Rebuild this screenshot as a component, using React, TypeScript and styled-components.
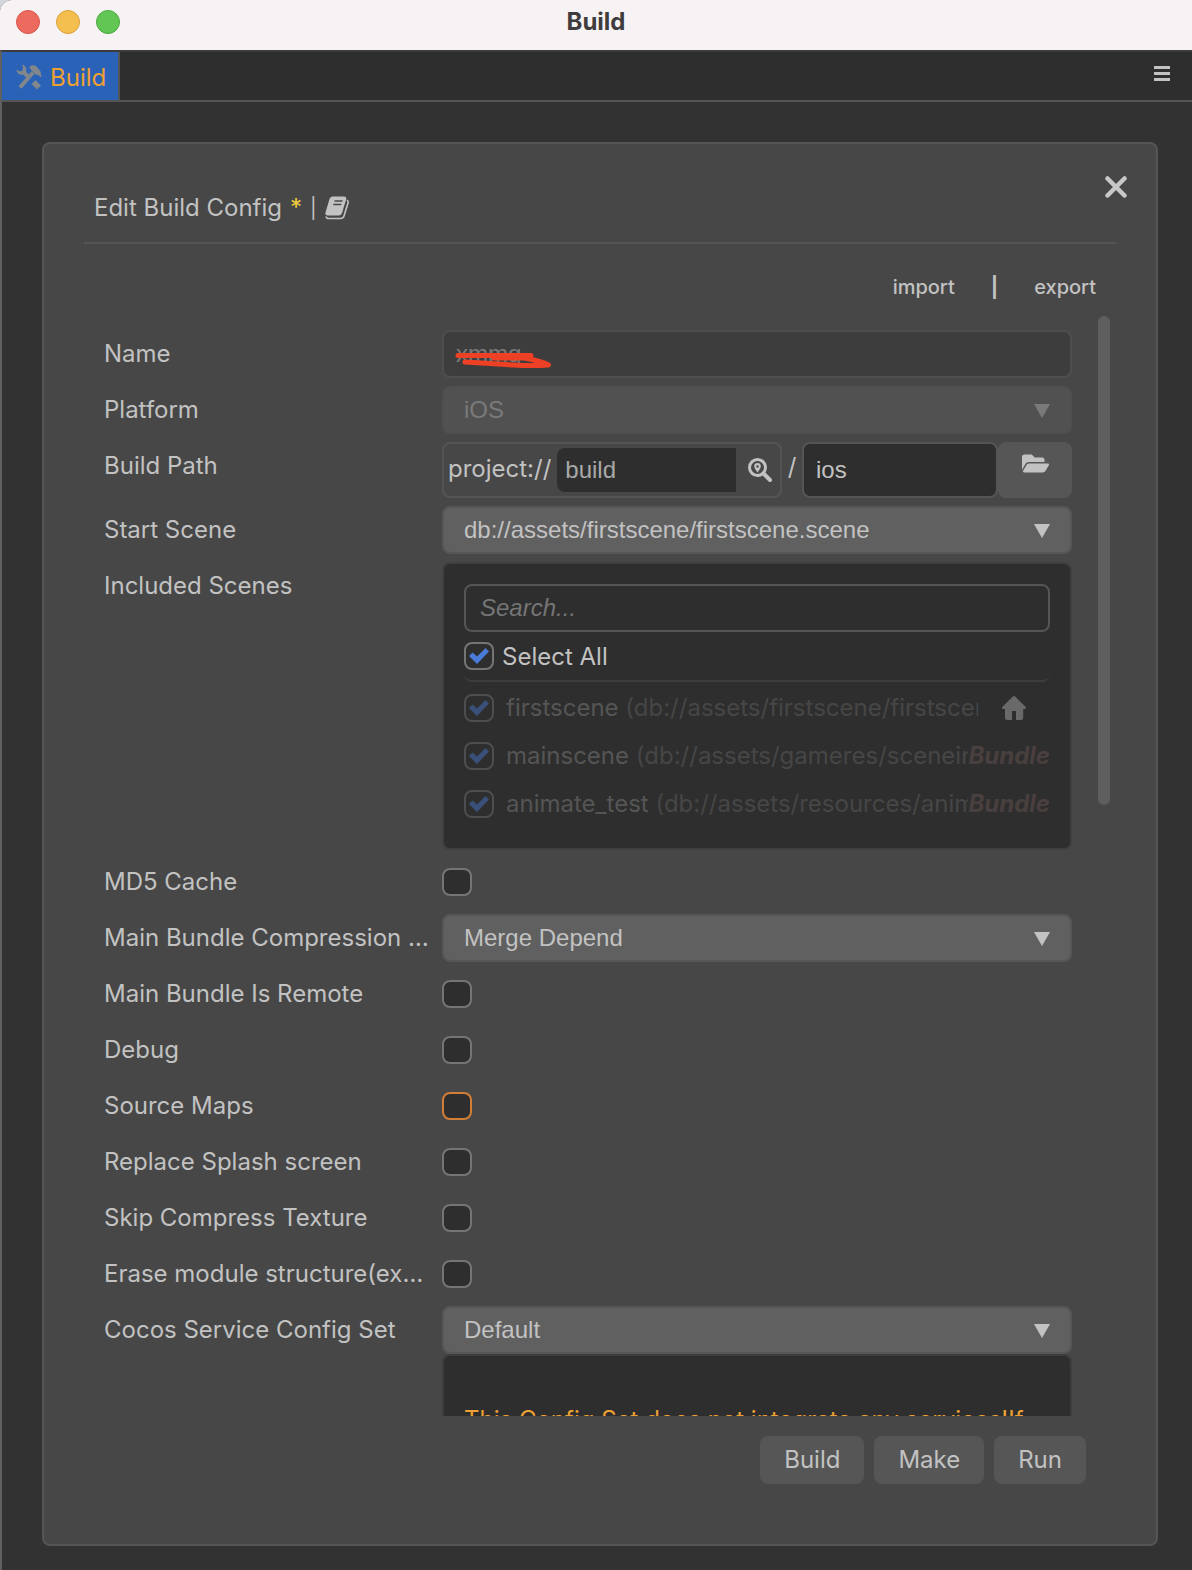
import React, { useState } from "react";
import styled, { createGlobalStyle } from "styled-components";
import { FaFolderOpen } from "react-icons/fa";

const ui = `Inter, "Noto Sans", sans-serif`;
const field = `"Liberation Sans", Arial, sans-serif`;

const GlobalStyle = createGlobalStyle`
  *, *::before, *::after { box-sizing: border-box; }
  body { margin: 0; background: #d3d6da; font-family: ${ui}; font-size: 24px; color: #c2c2c2; }
  button, input, select { font: inherit; color: inherit; margin: 0; }
`;

const Window = styled.div`
  display: flex;
  flex-direction: column;
  height: 100vh;
  border-radius: 12px 0 0 0;
  overflow: hidden;
  background: #323232;
`;

const TitleBar = styled.header`
  display: grid;
  grid-template-columns: 1fr auto 1fr;
  align-items: center;
  flex: none;
  height: 50px;
  padding: 0 16px 6px;
  background: #f7f3f4;
`;

const Lights = styled.div`
  display: flex;
  gap: 16px;
`;

const Light = styled.button<{ $fill: string; $edge: string }>`
  width: 24px;
  height: 24px;
  padding: 0;
  border: 1px solid ${(p) => p.$edge};
  border-radius: 50%;
  background: ${(p) => p.$fill};
`;

const WindowTitle = styled.h1`
  margin: 0;
  font-size: 24px;
  line-height: 30px;
  font-weight: 700;
  color: #3f3c3d;
`;

const TabBar = styled.nav`
  display: flex;
  align-items: stretch;
  justify-content: space-between;
  flex: none;
  height: 52px;
  border-top: 2px solid #3c3c3c;
  border-bottom: 2px solid #555555;
  border-left: 2px solid #606060;
  background: #2e2e2e;
`;

const Tab = styled.button`
  display: flex;
  align-items: center;
  gap: 8px;
  padding: 2px 12px 0 14px;
  border: 0;
  border-right: 2px solid #555555;
  background: #2a62b8;
  color: #eda033;
`;

const MenuButton = styled.button`
  display: flex;
  align-items: center;
  padding: 0 22px 4px;
  border: 0;
  background: none;
`;

const Stage = styled.main`
  display: flex;
  flex: 1;
  min-height: 0;
  padding: 40px 34px 24px 40px;
  border-left: 2px solid #606060;
`;

const Panel = styled.section`
  position: relative;
  display: flex;
  flex-direction: column;
  flex: 1;
  min-width: 0;
  padding: 0 40px 60px;
  border: 2px solid #555555;
  border-radius: 8px;
  background: #474747;
`;

const CloseButton = styled.button`
  position: absolute;
  top: 23px;
  right: 20px;
  display: grid;
  place-items: center;
  width: 40px;
  height: 40px;
  padding: 0;
  border: 0;
  background: none;
`;

const PanelHeader = styled.div`
  display: flex;
  align-items: center;
  gap: 8px;
  flex: none;
  padding: 48px 10px 18px;
  border-bottom: 2px solid #555555;
  line-height: 32px;
`;

const PanelTitle = styled.h2`
  margin: 0;
  font-size: 24px;
  font-weight: 400;
`;

const Changed = styled.span`
  color: #f0cc3c;
`;

const DocLink = styled.a`
  display: flex;
  color: inherit;
`;

const Transfer = styled.div`
  display: flex;
  justify-content: flex-end;
  align-items: center;
  gap: 36px;
  flex: none;
  padding: 28px 20px 14px;
  line-height: 30px;
`;

const TextButton = styled.button`
  padding: 0;
  border: 0;
  background: none;
  font-size: 20px;
  font-weight: 500;
`;

const Divider = styled.span<{ $strong?: boolean }>`
  font-size: 20px;
  font-weight: ${(p) => (p.$strong ? 700 : 400)};
`;

const Body = styled.div`
  display: flex;
  gap: 26px;
  flex: 1;
  min-height: 0;
  padding: 0 6px 0 20px;
`;

const Form = styled.form`
  display: flex;
  flex-direction: column;
  gap: 8px;
  flex: 1;
  min-width: 0;
  padding-top: 14px;
  overflow: hidden;
`;

const Track = styled.div`
  display: grid;
  grid-template-rows: 4fr 5fr;
  width: 12px;
`;

const Thumb = styled.div`
  border-radius: 6px;
  background: #5e5e5e;
`;

const Row = styled.div`
  display: grid;
  grid-template-columns: 326px minmax(0, 1fr);
  column-gap: 12px;
  flex: none;
`;

const Label = styled.label`
  overflow: hidden;
  line-height: 48px;
  white-space: nowrap;
  text-overflow: ellipsis;
`;

const CheckCell = styled.div`
  display: flex;
  align-items: center;
  height: 48px;
`;

const Check = styled.input.attrs({ type: "checkbox" })<{ $accent?: boolean }>`
  appearance: none;
  display: grid;
  place-items: center;
  flex: none;
  width: 30px;
  height: 28px;
  border: 2px solid ${(p) => (p.$accent ? "#d27e36" : "#757575")};
  border-radius: 8px;
  background: #2e2e2e;

  &:checked::before {
    content: "";
    width: 20px;
    height: 16px;
    background: #4a7bd8;
    clip-path: polygon(0 50%, 18% 28%, 40% 53%, 83% 0, 100% 22%, 40% 100%);
  }
  &:disabled {
    opacity: 0.45;
  }
`;

const TextField = styled.input`
  width: 100%;
  min-width: 0;
  height: 48px;
  padding: 0 12px;
  border: 2px solid #555555;
  border-radius: 8px;
  outline: 0;
  background: #2e2e2e;
  font-family: ${field};

  &:disabled {
    border-color: #4e4e4e;
    background: #3d3d3d;
    color: #7a7a7a;
  }
`;

const NameCell = styled.div`
  position: relative;
`;

const Scribble = styled.svg`
  position: absolute;
  left: 12px;
  top: 18px;
`;

const SelectBox = styled.div<{ $off?: boolean }>`
  position: relative;
  color: ${(p) => (p.$off ? "#7a7a7a" : "#c2c2c2")};
`;

const Select = styled.select`
  appearance: none;
  display: block;
  width: 100%;
  height: 48px;
  padding: 0 48px 2px 20px;
  border: 2px solid #565656;
  border-radius: 8px;
  outline: 0;
  background: #606060;
  font-family: ${field};

  &:disabled {
    border-color: #4f4f4f;
    background: #515151;
    opacity: 1;
  }
`;

const Caret = styled.svg`
  position: absolute;
  right: 22px;
  top: 18px;
  pointer-events: none;
`;

const PathCell = styled.div`
  display: grid;
  grid-template-columns: minmax(0, 340fr) 20px minmax(0, 196fr) minmax(0, 74fr);
  height: 56px;
`;

const PathBox = styled.div`
  display: flex;
  align-items: center;
  padding: 0 8px 0 4px;
  border: 2px solid #555555;
  border-radius: 8px;
`;

const Scheme = styled.span`
  padding-bottom: 4px;
  margin-right: 6px;
`;

const RootField = styled.input`
  flex: 1;
  min-width: 0;
  height: 44px;
  padding: 0 8px;
  border: 0;
  border-radius: 8px 0 0 8px;
  outline: 0;
  background: #2e2e2e;
  color: #a8a8a8;
  font-family: ${field};
`;

const LocateButton = styled.button`
  display: flex;
  padding: 0 0 0 12px;
  border: 0;
  background: none;
`;

const Slash = styled.span`
  line-height: 50px;
  text-align: center;
`;

const FolderField = styled(TextField)`
  height: 56px;
`;

const BrowseButton = styled.button`
  display: flex;
  justify-content: center;
  padding: 8px 0 0;
  border: 0;
  border-radius: 8px;
  background: #565656;
`;

const SceneBox = styled.div`
  padding: 20px;
  border: 2px solid #3f3f3f;
  border-radius: 8px;
  background: #2e2e2e;
`;

const SearchField = styled(TextField)`
  display: block;
  padding: 0 14px;

  &::placeholder {
    color: #757575;
    font-style: italic;
    opacity: 1;
  }
`;

const SelectAll = styled.label`
  display: flex;
  align-items: center;
  gap: 8px;
  height: 50px;
  margin-bottom: 2px;
  border-bottom: 2px solid #3d3d3d;
  border-radius: 8px;
`;

const SceneRow = styled.div`
  display: flex;
  align-items: center;
  height: 48px;
`;

const SceneLabel = styled.label`
  flex: 1;
  min-width: 0;
  padding-left: 12px;
  overflow: hidden;
  line-height: 36px;
  white-space: nowrap;
  color: #555555;
`;

const ScenePath = styled.span`
  color: #464646;
`;

const HomeSlot = styled.span`
  display: flex;
  padding: 0 24px;
  color: #696969;
`;

const BundleTag = styled.em`
  line-height: 36px;
  font-weight: 700;
  color: #4a3f3f;
`;

const Notice = styled.p`
  margin: 0;
  padding: 48px 20px;
  border: 2px solid #3d3d3d;
  border-radius: 8px;
  background: #2e2e2e;
  color: #eda033;
  line-height: 32px;
`;

const Actions = styled.footer`
  display: flex;
  justify-content: flex-end;
  gap: 10px;
  flex: none;
  padding: 20px 30px 0 0;
`;

const ActionButton = styled.button`
  height: 48px;
  padding: 0 24px 2px;
  border: 0;
  border-radius: 8px;
  background: #565656;
`;

const ToolsIcon = () => (
  <svg width="26" height="26" viewBox="0 0 26 26" fill="none" stroke="#82878c" aria-hidden="true">
    <path d="M4 23.5 17 8.5" strokeWidth="4" />
    <path d="M13 3C16 .5 19 1 21 3L24.5 7.500 25.500 13.500 22 11 19.500 10.500 16 7z" fill="#82878c" stroke="none" />
    <path d="M7 7.500 13.500 14" strokeWidth="4" />
    <path d="M17.5 18 23 23.5" strokeWidth="5.5" />
    <path d="M6 .5C10 1.500 11 5 10 8.500L8 10.500C4 11.500.5 9.500.5 5.500L3.500 7.500 6.500 6.500 7 3.500z" fill="#82878c" stroke="none" />
  </svg>
);

const BookIcon = () => (
  <svg width="24" height="24" viewBox="0 0 24 24" aria-hidden="true">
    <path d="M7.5.5H19Q22 .5 21.200 3.300L17 17Q16.200 19.500 13.500 19.500H2.500Q-.3 19.500.5 16.500L4.500 3Q5.300.5 7.500.5z" fill="#c2c2c2" />
    <path d="M22.500 4.500Q23.500 5.300 23 7L19 20Q18.200 22.500 15.500 22.500H4Q1.500 22.500 1.200 21" fill="none" stroke="#c2c2c2" strokeWidth="1.6" strokeLinecap="round" />
    <path d="M9.500 5h8M8.300 8.500h8" stroke="#474747" strokeWidth="1.4" />
  </svg>
);

const LocateIcon = () => (
  <svg width="24" height="24" viewBox="0 0 24 24" fill="none" stroke="#c2c2c2" aria-hidden="true">
    <circle cx="9.5" cy="9.5" r="8" strokeWidth="3" />
    <path d="M15.500 15.500 22 22" strokeWidth="4" strokeLinecap="round" />
    <path d="M9.500 14.500C7.500 11.500 6.200 10.200 6.200 8.300a3.300 3.300 0 0 1 6.600 0C12.800 10.200 11.500 11.500 9.500 14.500zM9.500 7.200a1.200 1.200 0 1 0 0 2.400 1.200 1.200 0 0 0 0-2.400z" fill="#c2c2c2" fillRule="evenodd" stroke="none" />
  </svg>
);

const HomeIcon = () => (
  <svg width="24" height="24" viewBox="0 0 24 24" fill="currentColor" aria-hidden="true">
    <path d="M10.800.6q1.200-1 2.400 0L23.700 11q.8 1.800-1.200 1.900h-1.300v8.600q0 2.500-2.500 2.500H14v-9h-4v9H5.500Q3 24 3 21.500v-8.600H1.500q-2-.1-1.200-1.900z" />
  </svg>
);

const Dropdown = ({ id, value, disabled }: { id: string; value: string; disabled?: boolean }) => (
  <SelectBox $off={disabled}>
    <Select id={id} disabled={disabled} defaultValue={value}>
      <option>{value}</option>
    </Select>
    <Caret width="16" height="14" viewBox="0 0 16 14" aria-hidden="true">
      <path d="M0 0h16L8 14z" fill="currentColor" />
    </Caret>
  </SelectBox>
);

const Toggle = ({ id, label, accent }: { id: string; label: string; accent?: boolean }) => (
  <Row>
    <Label htmlFor={id}>{label}</Label>
    <CheckCell>
      <Check id={id} $accent={accent} />
    </CheckCell>
  </Row>
);

const scenes = [
  { name: "firstscene", path: "(db://assets/firstscene/firstscene", home: true },
  { name: "mainscene", path: "(db://assets/gameres/sceneinfo", home: false },
  { name: "animate_test", path: "(db://assets/resources/anima", home: false },
];

export default function App() {
  const [query, setQuery] = useState("");
  return (
    <>
      <GlobalStyle />
      <Window>
        <TitleBar>
          <Lights>
            <Light $fill="#ed6a5e" $edge="#d5574c" aria-label="Close window" />
            <Light $fill="#f5bf4f" $edge="#d9a03b" aria-label="Minimize window" />
            <Light $fill="#62c655" $edge="#4ba73f" aria-label="Zoom window" />
          </Lights>
          <WindowTitle>Build</WindowTitle>
        </TitleBar>
        <TabBar>
          <Tab>
            <ToolsIcon />
            Build
          </Tab>
          <MenuButton aria-label="Menu">
            <svg width="16" height="16" viewBox="0 0 16 16" aria-hidden="true">
              <path d="M0 1.5h16M0 7.5h16M0 13.5h16" stroke="#c2c2c2" strokeWidth="3" />
            </svg>
          </MenuButton>
        </TabBar>
        <Stage>
          <Panel>
            <PanelHeader>
              <PanelTitle>Edit Build Config</PanelTitle>
              <Changed>*</Changed>
              <Divider>|</Divider>
              <DocLink href="#manual" aria-label="Manual">
                <BookIcon />
              </DocLink>
            </PanelHeader>
            <CloseButton aria-label="Close">
              <svg width="22" height="22" viewBox="0 0 22 22" aria-hidden="true">
                <path d="M2.5 2.5l17 17M19.5 2.5l-17 17" stroke="#c8c8c8" strokeWidth="4.5" strokeLinecap="round" />
              </svg>
            </CloseButton>
            <Transfer>
              <TextButton>import</TextButton>
              <Divider $strong>|</Divider>
              <TextButton>export</TextButton>
            </Transfer>
            <Body>
              <Form>
                <Row>
                  <Label htmlFor="name">Name</Label>
                  <NameCell>
                    <TextField id="name" defaultValue="xmmq" disabled />
                    <Scribble width="98" height="22" viewBox="0 0 98 22" fill="none" aria-hidden="true">
                      <path
                        d="M4 7.5H77M40 10H70Q88 13 94.5 17Q78 18 60 17T11 14"
                        stroke="#ee4025"
                        strokeWidth="5"
                        strokeLinecap="round"
                        strokeLinejoin="round"
                      />
                    </Scribble>
                  </NameCell>
                </Row>
                <Row>
                  <Label htmlFor="platform">Platform</Label>
                  <Dropdown id="platform" value="iOS" disabled />
                </Row>
                <Row>
                  <Label htmlFor="root">Build Path</Label>
                  <PathCell>
                    <PathBox>
                      <Scheme>project://</Scheme>
                      <RootField id="root" defaultValue="build" />
                      <LocateButton type="button" aria-label="Locate">
                        <LocateIcon />
                      </LocateButton>
                    </PathBox>
                    <Slash>/</Slash>
                    <FolderField aria-label="Output folder" defaultValue="ios" />
                    <BrowseButton type="button" aria-label="Browse">
                      <FaFolderOpen size={27} />
                    </BrowseButton>
                  </PathCell>
                </Row>
                <Row>
                  <Label htmlFor="start">Start Scene</Label>
                  <Dropdown id="start" value="db://assets/firstscene/firstscene.scene" />
                </Row>
                <Row>
                  <Label as="span">Included Scenes</Label>
                  <SceneBox>
                    <SearchField
                      aria-label="Search scenes"
                      placeholder="Search..."
                      value={query}
                      onChange={(e) => setQuery(e.target.value)}
                    />
                    <SelectAll>
                      <Check defaultChecked />
                      Select All
                    </SelectAll>
                    {scenes.map((s) => (
                      <SceneRow key={s.name}>
                        <Check id={s.name} defaultChecked disabled />
                        <SceneLabel htmlFor={s.name}>
                          {s.name} <ScenePath>{s.path}</ScenePath>
                        </SceneLabel>
                        {s.home ? (
                          <HomeSlot>
                            <HomeIcon />
                          </HomeSlot>
                        ) : (
                          <BundleTag>Bundle</BundleTag>
                        )}
                      </SceneRow>
                    ))}
                  </SceneBox>
                </Row>
                <Toggle id="md5" label="MD5 Cache" />
                <Row>
                  <Label htmlFor="compression">Main Bundle Compression Type</Label>
                  <Dropdown id="compression" value="Merge Depend" />
                </Row>
                <Toggle id="remote" label="Main Bundle Is Remote" />
                <Toggle id="debug" label="Debug" />
                <Toggle id="maps" label="Source Maps" accent />
                <Toggle id="splash" label="Replace Splash screen" />
                <Toggle id="texture" label="Skip Compress Texture" />
                <Toggle id="erase" label="Erase module structure(experiment)" />
                <Row>
                  <Label htmlFor="service">Cocos Service Config Set</Label>
                  <div>
                    <Dropdown id="service" value="Default" />
                    <Notice>This Config Set does not integrate any services!If</Notice>
                  </div>
                </Row>
              </Form>
              <Track aria-hidden="true">
                <Thumb />
              </Track>
            </Body>
            <Actions>
              <ActionButton>Build</ActionButton>
              <ActionButton>Make</ActionButton>
              <ActionButton>Run</ActionButton>
            </Actions>
          </Panel>
        </Stage>
      </Window>
    </>
  );
}
